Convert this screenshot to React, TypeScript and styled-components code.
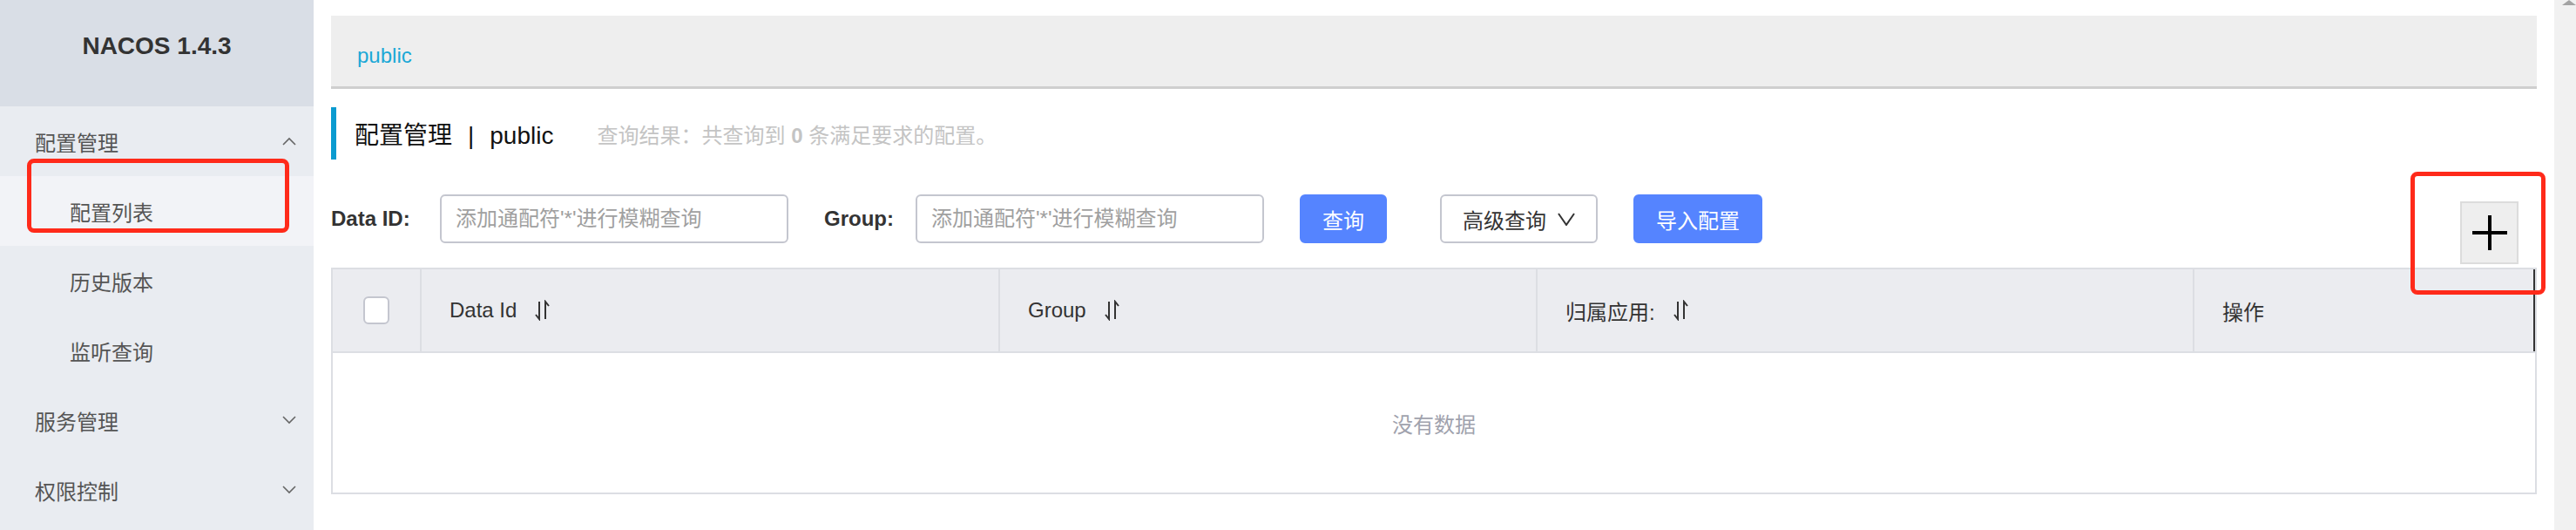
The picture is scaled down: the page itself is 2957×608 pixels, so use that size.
import React from 'react';
import styled, { createGlobalStyle } from 'styled-components';

const GlobalStyle = createGlobalStyle`
  html, body {
    margin: 0;
    padding: 0;
    background: #ffffff;
  }
  body {
    font-family: "Liberation Sans", "Noto Sans CJK SC", sans-serif;
  }
  * {
    box-sizing: border-box;
  }
`;

const Page = styled.div`
  position: relative;
  display: flex;
  width: 2957px;
  height: 608px;
  overflow: hidden;
`;

const Sidebar = styled.aside`
  display: flex;
  flex-direction: column;
  width: 360px;
  flex-shrink: 0;
  background: #e9ecf1;
`;

const SideHeader = styled.div`
  height: 122px;
  padding-top: 33px;
  background: #d9dee6;
  text-align: center;
  font-size: 28px;
  line-height: 40px;
  font-weight: bold;
  color: #333;
`;

const MenuItem = styled.div<{ $level: number; $active?: boolean }>`
  display: flex;
  align-items: center;
  justify-content: space-between;
  height: 80px;
  padding-left: ${(p) => (p.$level === 1 ? 40 : 80)}px;
  padding-right: 20px;
  font-size: 24px;
  color: #555;
  background: ${(p) => (p.$active ? '#f2f3f7' : 'transparent')};
`;

const Main = styled.main`
  flex: 1;
  display: flex;
  flex-direction: column;
  padding: 18px 20px 0 20px;
  background: #ffffff;
`;

const ScrollTrack = styled.div`
  width: 25px;
  flex-shrink: 0;
  padding-left: 9px;
  background: #f1f1f1;
`;

const ScrollArrow = styled.div`
  width: 0;
  height: 0;
  border-left: 8px solid transparent;
  border-right: 8px solid transparent;
  border-bottom: 6px solid #a3a3a3;
`;

const Breadcrumb = styled.div`
  height: 84px;
  padding: 26px 0 0 30px;
  background: #eeeeee;
  border-bottom: 3px solid #cfcfcf;
  font-size: 24px;
  line-height: 40px;
  color: #1ba8d6;
`;

const TitleBlock = styled.div`
  display: flex;
  align-items: center;
  height: 60px;
  margin-top: 21px;
  padding-left: 21px;
  border-left: 6px solid #0a9bd0;
`;

const Title = styled.span`
  font-size: 28px;
  color: #111;
`;

const TitleSep = styled.span`
  margin: 0 18px;
`;

const ResultNote = styled.span`
  margin-left: 50px;
  font-size: 24px;
  color: #c4c4c4;
  b {
    font-weight: bold;
  }
`;

const SearchRow = styled.div`
  display: flex;
  align-items: flex-start;
  height: 56px;
  margin-top: 40px;
`;

const FieldLabel = styled.label<{ $width: number }>`
  width: ${(p) => p.$width}px;
  margin-right: 24px;
  font-size: 24px;
  line-height: 56px;
  font-weight: bold;
  color: #333;
  white-space: nowrap;
`;

const SearchInput = styled.input`
  width: 400px;
  height: 56px;
  margin-right: 41px;
  padding: 0 16px;
  border: 2px solid #c4c6cf;
  border-radius: 6px;
  font-family: inherit;
  font-size: 24px;
  color: #333;
  outline: none;
  &::placeholder {
    color: #a0a0a0;
  }
`;

const Button = styled.button<{ $primary?: boolean; $gap: number }>`
  display: flex;
  align-items: center;
  justify-content: center;
  gap: 13px;
  height: 56px;
  margin-right: ${(p) => p.$gap}px;
  padding: 0 24px;
  border: 2px solid ${(p) => (p.$primary ? '#5584ff' : '#c4c6cf')};
  border-radius: 6px;
  background: ${(p) => (p.$primary ? '#5584ff' : '#ffffff')};
  color: ${(p) => (p.$primary ? '#ffffff' : '#333')};
  font-family: inherit;
  font-size: 24px;
  white-space: nowrap;
`;

const PlusButton = styled.button`
  display: flex;
  align-items: center;
  justify-content: center;
  flex-shrink: 0;
  width: 67px;
  height: 72px;
  margin: 8px 21px 0 auto;
  padding: 0;
  background: #eeeeee;
  border: 2px solid #dcdcdc;
`;

const Table = styled.div`
  margin-top: 28px;
  border: 2px solid #dcdee3;
`;

const HeadRow = styled.div`
  display: grid;
  grid-template-columns: 100px 664px 617px 754px 1fr;
  height: 96px;
  background: #ebecf0;
  border-bottom: 2px solid #dcdee3;
`;

const HeadCell = styled.div<{ $first?: boolean; $last?: boolean }>`
  display: flex;
  align-items: center;
  justify-content: ${(p) => (p.$first ? 'center' : 'flex-start')};
  gap: 20px;
  padding: 0 ${(p) => (p.$first ? 0 : 32)}px;
  border-left: ${(p) => (p.$first ? 'none' : '2px solid #dcdee3')};
  box-shadow: ${(p) => (p.$last ? 'inset -2px 0 0 #333' : 'none')};
  font-size: 24px;
  color: #333;
  white-space: nowrap;
`;

const Checkbox = styled.span`
  display: block;
  width: 30px;
  height: 32px;
  background: #ffffff;
  border: 2px solid #c4c6cf;
  border-radius: 6px;
`;

const EmptyBody = styled.div`
  display: flex;
  align-items: center;
  justify-content: center;
  height: 160px;
  font-size: 24px;
  color: #a0a2ad;
`;

const Annotation = styled.div<{ $x: number; $y: number; $w: number; $h: number }>`
  position: absolute;
  left: ${(p) => p.$x}px;
  top: ${(p) => p.$y}px;
  width: ${(p) => p.$w}px;
  height: ${(p) => p.$h}px;
  border: 5px solid #ff2a1a;
  border-radius: 8px;
  pointer-events: none;
`;

const Chevron = ({ up }: { up?: boolean }) => (
  <svg width="16" height="10" viewBox="0 0 16 10" fill="none">
    <path d={up ? 'M1 9 L8 2 L15 9' : 'M1 1 L8 8 L15 1'} stroke="#666" strokeWidth="1.6" />
  </svg>
);

const SortIcon = () => (
  <svg width="20" height="24" viewBox="0 0 20 24" fill="none">
    <path d="M6 2 V22 L2 17" stroke="#333" strokeWidth="2" />
    <path d="M13 22 V2 L17 7" stroke="#333" strokeWidth="2" />
  </svg>
);

const menu = [
  { label: '配置管理', level: 1, arrow: 'up' },
  { label: '配置列表', level: 2, active: true },
  { label: '历史版本', level: 2 },
  { label: '监听查询', level: 2 },
  { label: '服务管理', level: 1, arrow: 'down' },
  { label: '权限控制', level: 1, arrow: 'down' },
];

const App: React.FC = () => {
  return (
    <Page>
      <GlobalStyle />
      <Sidebar>
        <SideHeader>NACOS 1.4.3</SideHeader>
        {menu.map((m) => (
          <MenuItem key={m.label} $level={m.level} $active={m.active}>
            <span>{m.label}</span>
            {m.arrow && <Chevron up={m.arrow === 'up'} />}
          </MenuItem>
        ))}
      </Sidebar>

      <Main>
        <Breadcrumb>public</Breadcrumb>

        <TitleBlock>
          <Title>
            配置管理<TitleSep>|</TitleSep>public
          </Title>
          <ResultNote>
            查询结果：共查询到 <b>0</b> 条满足要求的配置。
          </ResultNote>
        </TitleBlock>

        <SearchRow>
          <FieldLabel $width={101}>Data ID:</FieldLabel>
          <SearchInput placeholder="添加通配符'*'进行模糊查询" />
          <FieldLabel $width={81}>Group:</FieldLabel>
          <SearchInput placeholder="添加通配符'*'进行模糊查询" />
          <Button $primary $gap={61}>查询</Button>
          <Button $gap={41}>
            高级查询
            <svg width="20" height="15" viewBox="0 0 20 15" fill="none">
              <path d="M1 1 L10 14 L19 1" stroke="#333" strokeWidth="2" />
            </svg>
          </Button>
          <Button $primary $gap={0}>导入配置</Button>
          <PlusButton>
            <svg width="40" height="40" viewBox="0 0 40 40">
              <path d="M0 20 H40 M20 0 V40" stroke="#000" strokeWidth="4" />
            </svg>
          </PlusButton>
        </SearchRow>

        <Table>
          <HeadRow>
            <HeadCell $first>
              <Checkbox />
            </HeadCell>
            <HeadCell>
              Data Id <SortIcon />
            </HeadCell>
            <HeadCell>
              Group <SortIcon />
            </HeadCell>
            <HeadCell>
              归属应用: <SortIcon />
            </HeadCell>
            <HeadCell $last>操作</HeadCell>
          </HeadRow>
          <EmptyBody>没有数据</EmptyBody>
        </Table>
      </Main>

      <ScrollTrack>
        <ScrollArrow />
      </ScrollTrack>

      <Annotation $x={31} $y={182} $w={301} $h={85} />
      <Annotation $x={2767} $y={197} $w={155} $h={141} />
    </Page>
  );
};

export default App;
